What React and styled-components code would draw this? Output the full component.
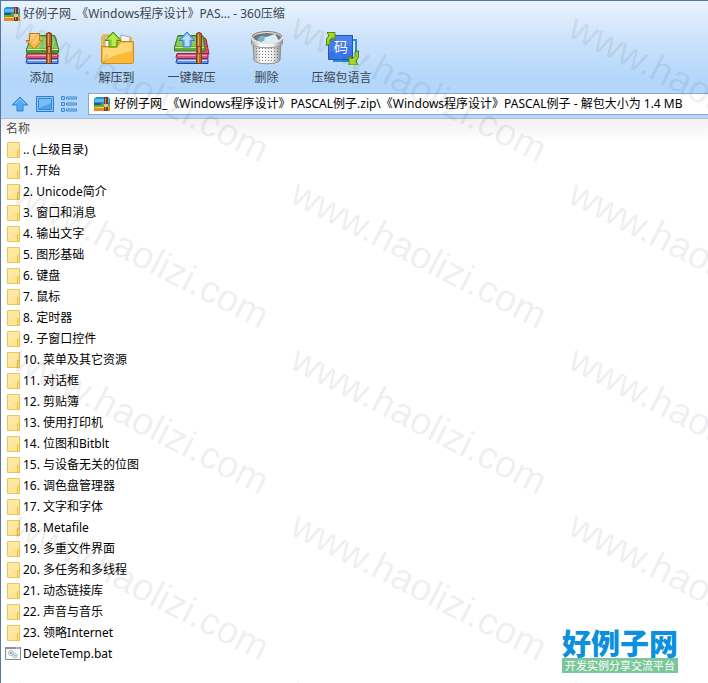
import React from "react";
import styled, { createGlobalStyle } from "styled-components";

const GlobalStyle = createGlobalStyle`
  * { box-sizing: border-box; }
  body {
    margin: 0;
    background: #fff;
    color: #000;
    font: 12px/20px "Noto Sans", "Noto Sans CJK SC", sans-serif;
  }
  button, input { font: inherit; color: inherit; }
  svg { display: block; flex: none; }
`;

const Window = styled.div`
  position: relative;
  min-height: 100vh;
  overflow: hidden;
  border-top: 1px solid #55779f;
  border-left: 1px solid #55779f;
`;

const Header = styled.header`
  background: linear-gradient(#e9f3fe 0, #cbe2fa 40px, #b3d7fb 78px, #b5d7fa 100%);
  border-bottom: 1px solid #b3bcc8;
`;

const TitleBar = styled.div`
  display: flex;
  align-items: center;
  gap: 3px;
  height: 26px;
  padding-left: 3px;
  color: #3c4650;
`;

const Title = styled.h1`
  margin: 0;
  font-size: 12px;
  font-weight: 400;
  white-space: nowrap;
`;

const Toolbar = styled.div`
  display: flex;
  height: 62px;
  padding-left: 3px;
`;

const ToolButton = styled.button`
  display: flex;
  flex-direction: column;
  align-items: center;
  justify-content: space-between;
  width: 75px;
  padding: 2px 0 1px;
  border: 0;
  background: none;
  color: #3c4650;
  white-space: nowrap;
`;

const AddressRow = styled.div`
  display: flex;
  align-items: center;
  height: 29px;
  gap: 7px;
  padding-left: 10px;
`;

const IconButton = styled.button`
  padding: 0;
  border: 0;
  background: none;
`;

const AddressBox = styled.label`
  display: flex;
  flex: 1;
  align-items: center;
  gap: 4px;
  height: 22px;
  margin-left: 4px;
  padding-left: 5px;
  border: 1px solid #86a9d3;
  border-right: 0;
  background: #fff;
`;

const AddressInput = styled.input`
  flex: 1;
  min-width: 0;
  padding: 0;
  border: 0;
  outline: 0;
  background: none;
`;

const FileTable = styled.table`
  width: 100%;
  border-collapse: collapse;
  background: linear-gradient(#f0f0f0, #fff 22px);
`;

const ColumnHead = styled.th`
  height: 20px;
  padding: 0 5px;
  color: #4c4c4c;
  font-weight: 400;
  line-height: 18px;
  text-align: left;
`;

const FileCell = styled.td`
  height: 21px;
  padding: 0 4px;
`;

const FileName = styled.div`
  display: flex;
  align-items: center;
  gap: 2px;
  height: 21px;
  white-space: nowrap;
`;

const WatermarkLayer = styled.div`
  position: absolute;
  inset: 0;
  display: grid;
  grid-template-columns: repeat(3, 278px);
  grid-auto-rows: 166px;
  padding: 1px 0 0 6px;
  pointer-events: none;
  overflow: hidden;
`;

const Watermark = styled.span`
  color: rgba(0, 0, 0, 0.075);
  font: 38px/40px "Liberation Sans", sans-serif;
  white-space: nowrap;
  transform: rotate(27deg);
  transform-origin: 0 40px;
`;

const SiteBadge = styled.aside`
  position: absolute;
  right: 30px;
  bottom: 10px;
  display: flex;
  flex-direction: column;
  align-items: center;
`;

const SiteName = styled.strong`
  color: #0a90dc;
  font: 900 29px/32px "Noto Sans CJK SC", sans-serif;
`;

const SiteSlogan = styled.span`
  width: 100%;
  background: #7bc799;
  color: #fff;
  font: 11px/15px "Noto Sans CJK SC", sans-serif;
  text-align: center;
`;

function ArchiveIcon() {
  return (
    <svg width="16" height="14" viewBox="0 0 16 14" aria-hidden="true">
      <path d="M1 1 2 0h12l2 2v5H0V2z" fill="#2a91d8" />
      <path d="M1 2h14v3H1z" fill="#62bdee" />
      <path d="M0 7h16v3H0z" fill="#65a92e" />
      <path d="M0 6h7v2H0z" fill="#145b9f" />
      <path d="M0 10h16v4H0z" fill="#ee8720" />
      <path d="M1 10h14v1H1z" fill="#ffd15b" />
      <path d="M10 0h4v14h-4z" fill="#713e22" />
      <path d="M11 1h1v12h-1z" fill="#c58953" />
      <path d="M10 7h4v3h-4z" fill="#dac5a0" />
    </svg>
  );
}

function Books() {
  return (
    <>
      <path d="M3 29.500h30l1 1v4H3l-1-1z" fill="#5a93ea" stroke="#24479c" />
      <path d="M4 31h29v1H4z" fill="#cfe3ff" />
      <path d="M3 24.500h30l1 1v4H3l-1-1z" fill="#dc5278" stroke="#8d1f42" />
      <path d="M4 26h29v1H4z" fill="#f6a5b8" />
    </>
  );
}

function Strap() {
  return (
    <>
      <path d="M22.500 4.500q2.500-2 5 0v30h-5z" fill="#b86a2e" stroke="#7b3c14" />
      <path d="M24 5h1v29h-1z" fill="#e3a468" />
      <path d="M22 17h6v8h-6z" fill="#8a481c" />
      <path d="M24 18h2v6h-2z" fill="#d9924f" />
    </>
  );
}

function AddIcon() {
  return (
    <svg width="36" height="36" viewBox="0 0 36 36" aria-hidden="true">
      <Books />
      <path d="M8 6.500h22q1 0 1.500 2L34.500 20v4h-32v-4z" fill="#77bb4a" stroke="#3a7e22" />
      <path d="M8 8h22l3 11H4z" fill="#94cf6b" />
      <path d="M3 20h31v1H3z" fill="#d8f2b8" />
      <path d="M3 21h31v3H3z" fill="#4d9a2d" />
      <Strap />
      <path d="M5.500 4.500h10v7h3L10 20l-8-8.500h3.500z" fill="#fdb645" stroke="#c97a18" />
      <path d="M6 5h9v5l-5 6-4-4z" fill="#ffd685" opacity=".7" />
    </svg>
  );
}

function ExtractIcon() {
  return (
    <svg width="36" height="36" viewBox="0 0 36 36" aria-hidden="true">
      <path d="M2 34V8l2-3h9l2 3h18v26z" fill="#eab64e" />
      <path d="m6 8 11-2 2 14H6z" fill="#fafafa" stroke="#aaa" />
      <path d="m22 6 9 2-1 12h-9z" fill="#f4f4f4" stroke="#a8a8a8" />
      <path d="M2.500 17.500H17l4-5h13.500v21l-1 1h-30l-1-1z" fill="#fcb936" stroke="#c98b22" />
      <path d="M4 19h14l4-5h11v8Q20 24 4 32z" fill="#ffdc80" opacity=".85" />
      <path d="m14 3 8 8.500h-4V18h-8v-6.500H6z" fill="#92d222" stroke="#469218" />
      <path d="m14 5 5 5.500h-2V17h-4v-6.500H9z" fill="#c6f05c" opacity=".8" />
    </svg>
  );
}

function OneKeyIcon() {
  return (
    <svg width="36" height="36" viewBox="0 0 36 36" aria-hidden="true">
      <path d="m29 8 3 2 3 15h-9z" fill="#dc4e6e" stroke="#99203f" />
      <Books />
      <path d="M4 6.500h24q1 0 1.500 2L31 18v4H.500v-4z" fill="#62ae35" stroke="#357b20" />
      <path d="M4 8h24l2 9H2z" fill="#8acb5d" />
      <path d="M1 18h29v1H1z" fill="#c5eb9e" />
      <Strap />
      <path d="m13 3 8 8.500h-4V18H9v-6.500H5z" fill="#74b8fb" stroke="#3d7cc4" />
      <path d="m13 5 5 5.500h-3V17h-4v-6.500H8z" fill="#b9dfff" />
    </svg>
  );
}

function TrashIcon() {
  return (
    <svg width="36" height="36" viewBox="0 0 36 36" aria-hidden="true">
      <defs>
        <linearGradient id="can">
          <stop stopColor="#aaa" />
          <stop offset=".3" stopColor="#fff" />
          <stop offset=".7" stopColor="#eee" />
          <stop offset="1" stopColor="#909090" />
        </linearGradient>
        <pattern id="mesh" width="3" height="3" patternUnits="userSpaceOnUse">
          <path d="M1 1h1v1H1z" fill="#777" />
        </pattern>
      </defs>
      <path d="m4 11 1 20c2 5 24 5 26 0l1-20z" fill="url(#can)" stroke="#8c8c8c" />
      <path d="m5 16 1 14c3 4 21 4 24 0l1-14c-4 4-22 4-26 0z" fill="url(#mesh)" />
      <path d="M2.500 9v6c3 5 28 5 31 0V9z" fill="url(#can)" stroke="#919191" />
      <ellipse cx="18" cy="8.500" rx="15" ry="5.500" fill="#777" stroke="#e4e4e4" strokeWidth="2" />
      <path d="M3 8a15 5.500 0 0 1 30 0" fill="none" stroke="#777" />
      <path d="m9 10 3-3 5 1 9-3 4 7-6 1.500-10-.5z" fill="#d9ecf7" />
      <path d="m9 10 3-3 4 1-1 4-5 0z" fill="#70b5de" />
    </svg>
  );
}

function LanguageIcon() {
  return (
    <svg width="36" height="36" viewBox="0 0 36 36" aria-hidden="true">
      <path d="M10 11h22v21H10z" fill="#c8eaff" stroke="#2193d5" strokeWidth="2" />
      <path d="M4.500 6.500h24v24h-24z" fill="#3c76ec" stroke="#2453bb" />
      <path d="M5 7h23v9L5 24z" fill="#6498f5" opacity=".4" />
      <text x="17" y="23" textAnchor="middle" fill="#fff" fontSize="14" fontFamily="Noto Sans CJK SC">码</text>
      <path d="M2.500 16.500V10L5 6.500 3 3.500h8v8L8.500 9 6 11v4z" fill="#a9d728" stroke="#508b12" />
      <path d="M34.500 22v6L32 32l2 4h-9v-9l3 3 3-3v-4z" fill="#a9d728" stroke="#508b12" />
    </svg>
  );
}

function UpIcon() {
  return (
    <svg width="18" height="18" viewBox="0 0 18 18" aria-hidden="true">
      <path d="m9 2 8 8h-5v6H6v-6H1z" fill="#54a9f2" stroke="#3983cd" />
      <path d="m4 9 5-5 5 5" fill="none" stroke="#8acbff" />
    </svg>
  );
}

function PaneIcon() {
  return (
    <svg width="18" height="16" viewBox="0 0 18 16" aria-hidden="true">
      <path d="M.5.5h17v15H.5z" fill="#8bc7fa" stroke="#357bc5" />
      <path d="M2.500 2.500h13v11h-13z" fill="#4ba2ee" stroke="#3a86d2" />
      <path d="M3 3h12v4L3 12z" fill="#79bef6" />
    </svg>
  );
}

function ListIcon() {
  return (
    <svg width="16" height="16" viewBox="0 0 16 16" fill="#92caf8" stroke="#438bd0" aria-hidden="true">
      <path d="M.5.5h3v3h-3zm5 .5h10v2h-10zM.5 6.500h3v3h-3zm5 .5h10v2h-10zM.5 12.500h3v3h-3zm5 .5h10v2h-10z" />
    </svg>
  );
}

function FolderIcon() {
  return (
    <svg width="16" height="18" viewBox="0 0 16 18" aria-hidden="true">
      <path d="M2.500 1.500h12v15h-12z" fill="#ffe494" stroke="#e9c75c" />
      <path d="M3 2h11v5L3 13z" fill="#ffeaa6" opacity=".7" />
      <path d="M12.500 16.500V10l1-1 1 1v6.500z" fill="#ffe28a" stroke="#e6bf4c" />
    </svg>
  );
}

function BatchIcon() {
  return (
    <svg width="16" height="14" viewBox="0 0 16 14" aria-hidden="true">
      <path d="M.5.5h15v12H.5z" fill="#f9fafb" stroke="#838991" />
      <path d="M0 0h16v2H0z" fill="#89919a" />
      <path d="M11 1h1m1 0h1" stroke="#fff" />
      <circle cx="6" cy="6" r="2.500" fill="#eee" stroke="#8b949b" strokeDasharray="1 .5" />
      <circle cx="6" cy="6" r="1" fill="#7f8991" />
      <circle cx="10" cy="8.500" r="2.200" fill="#d5edf6" stroke="#75afc8" strokeDasharray="1 .5" />
      <circle cx="10" cy="8.500" r=".8" fill="#8cabb8" />
    </svg>
  );
}

const tools = [
  ["添加", AddIcon],
  ["解压到", ExtractIcon],
  ["一键解压", OneKeyIcon],
  ["删除", TrashIcon],
  ["压缩包语言", LanguageIcon],
];

const folders = [
  ".. (上级目录)", "1. 开始", "2. Unicode简介", "3. 窗口和消息", "4. 输出文字",
  "5. 图形基础", "6. 键盘", "7. 鼠标", "8. 定时器", "9. 子窗口控件",
  "10. 菜单及其它资源", "11. 对话框", "12. 剪贴簿", "13. 使用打印机",
  "14. 位图和Bitblt", "15. 与设备无关的位图", "16. 调色盘管理器",
  "17. 文字和字体", "18. Metafile", "19. 多重文件界面", "20. 多任务和多线程",
  "21. 动态链接库", "22. 声音与音乐", "23. 领略Internet",
];

function FileRow({ name, icon: Icon }) {
  return (
    <tr>
      <FileCell>
        <FileName><Icon />{name}</FileName>
      </FileCell>
    </tr>
  );
}

export default function App() {
  return (
    <Window>
      <GlobalStyle />
      <Header>
        <TitleBar>
          <ArchiveIcon />
          <Title>好例子网_《Windows程序设计》PAS... - 360压缩</Title>
        </TitleBar>
        <Toolbar>
          {tools.map(([label, Icon]) => (
            <ToolButton key={label} type="button"><Icon />{label}</ToolButton>
          ))}
        </Toolbar>
        <AddressRow>
          <IconButton type="button" aria-label="向上"><UpIcon /></IconButton>
          <IconButton type="button" aria-label="预览"><PaneIcon /></IconButton>
          <IconButton type="button" aria-label="列表"><ListIcon /></IconButton>
          <AddressBox>
            <ArchiveIcon />
            <AddressInput
              aria-label="路径"
              defaultValue="好例子网_《Windows程序设计》PASCAL例子.zip\《Windows程序设计》PASCAL例子 - 解包大小为 1.4 MB"
            />
          </AddressBox>
        </AddressRow>
      </Header>
      <FileTable>
        <thead>
          <tr><ColumnHead scope="col">名称</ColumnHead></tr>
        </thead>
        <tbody>
          {folders.map((name) => <FileRow key={name} name={name} icon={FolderIcon} />)}
          <FileRow name="DeleteTemp.bat" icon={BatchIcon} />
        </tbody>
      </FileTable>
      <WatermarkLayer aria-hidden="true">
        {Array.from({ length: 15 }, (_, i) => <Watermark key={i}>www.haolizi.com</Watermark>)}
      </WatermarkLayer>
      <SiteBadge>
        <SiteName>好例子网</SiteName>
        <SiteSlogan>开发实例分享交流平台</SiteSlogan>
      </SiteBadge>
    </Window>
  );
}
